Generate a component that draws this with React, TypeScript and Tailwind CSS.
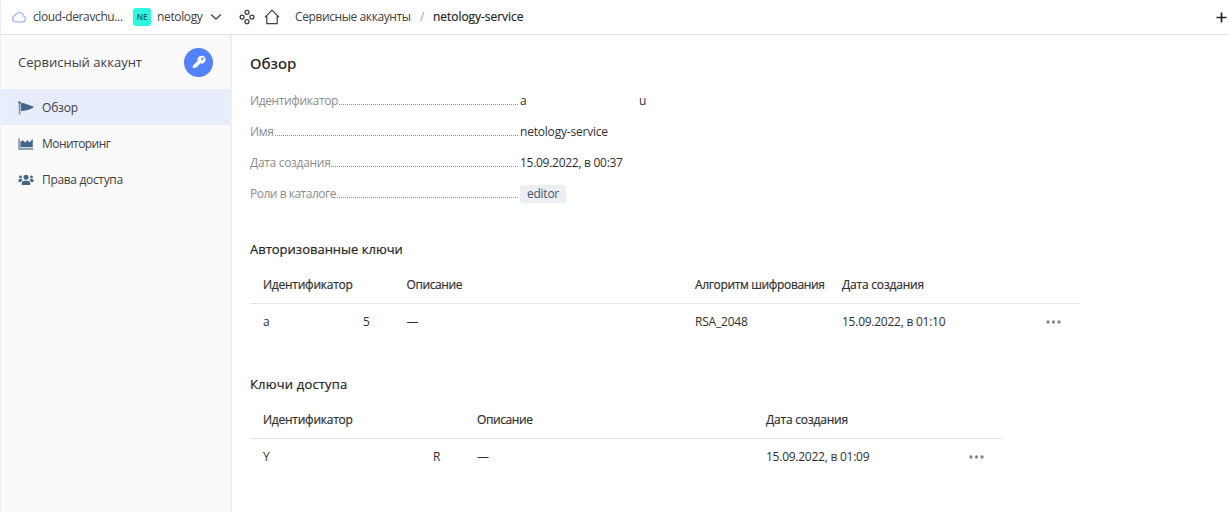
import type { ReactNode } from 'react'

const regular = "font-['Open_Sans','Noto_Sans',sans-serif]"
const medium = "font-['Noto_Sans','Open_Sans',sans-serif] font-medium"
const semi = '[-webkit-text-stroke:0.2px]'

function CloudIcon() {
  return (
    <svg width="16" height="12" viewBox="0 0 16 12" fill="none" stroke="#a3b9f4" strokeWidth="1.3">
      <path d="M4 10.8h7.7a2.9 2.9 0 0 0 1-5.6A4.3 4.3 0 0 0 4.4 4.4 3.3 3.3 0 0 0 4 10.8Z" />
    </svg>
  )
}

function ChevronIcon() {
  return (
    <svg width="12" height="8" viewBox="0 0 12 8" fill="none" stroke="#404040" strokeWidth="1.3">
      <path d="M1.2 1.5 6 6.2l4.8-4.7" />
    </svg>
  )
}

function ServicesIcon() {
  return (
    <svg width="16" height="16" viewBox="0 0 16 16" fill="none" stroke="#404040" strokeWidth="1.25">
      <circle cx="8" cy="3.3" r="2" />
      <circle cx="8" cy="12.7" r="2" />
      <circle cx="3.1" cy="8" r="2" />
      <circle cx="12.9" cy="8" r="2" />
    </svg>
  )
}

function HomeIcon() {
  return (
    <svg width="16" height="16" viewBox="0 0 16 16" fill="none" stroke="#404040" strokeWidth="1.2">
      <path d="M.9 8.3 8 1.2l7.1 7.1M2.8 6.8v7.9h10.4V6.8" />
    </svg>
  )
}

function KeyIcon() {
  return (
    <svg width="14" height="14" viewBox="0 0 14 14">
      <path
        fill="#fff"
        fillRule="evenodd"
        d="M9.400.7a3.900 3.900 0 1 1-1.200 7.500L7.300 9.100v1.200H6v1.200H4.800L4 12.700l-2.500.6-.8-.6.1-2L5.700 5.800A3.900 3.900 0 0 1 9.400.7Zm.9 1.900a1.200 1.200 0 1 0 0 2.400 1.200 1.200 0 0 0 0-2.400Z"
      />
    </svg>
  )
}

function FlagIcon() {
  return (
    <svg width="16" height="14" viewBox="0 0 16 14" fill="#44668a">
      <circle cx="1.6" cy="1.5" r="1.3" />
      <path d="M.8 2h1.600v11.400H.8z" opacity=".7" />
      <path d="M3 2.100C7 2 10 4.100 15.300 5.400v1.400C10.500 8.900 7.500 10 3 10Z" />
    </svg>
  )
}

function ChartIcon() {
  return (
    <svg width="16" height="14" viewBox="0 0 16 14" fill="#44668a">
      <path d="M.4 1.500h1.400v9.700h13.400v1.500H.4z" opacity=".8" />
      <path d="M2.400 10.300V4.800l2.300-1.500L7.300 5.500l2-2.500 2 2.500L14.800 2v8.300z" />
    </svg>
  )
}

function UsersIcon() {
  return (
    <svg width="16" height="14" viewBox="0 0 16 14" fill="#44668a">
      <circle cx="8" cy="4.300" r="2.500" />
      <circle cx="2.500" cy="4" r="1.400" />
      <circle cx="13.500" cy="4" r="1.400" />
      <path d="M3.700 12v-1.500A2.700 2.700 0 0 1 6.400 7.700h3.200a2.700 2.700 0 0 1 2.700 2.800V12Z" />
      <path d="M.5 9V7.500A1.500 1.500 0 0 1 2 6.100h1.500l1.200.7A4 4 0 0 0 3 9ZM15.500 9V7.500A1.500 1.500 0 0 0 14 6.100h-1.500l-1.200.7A4 4 0 0 1 13 9Z" />
    </svg>
  )
}

function DotsIcon() {
  return (
    <svg width="16" height="4" viewBox="0 0 16 4" fill="#858585">
      <circle cx="3" cy="2" r="1.700" />
      <circle cx="8.500" cy="2" r="1.700" />
      <circle cx="14" cy="2" r="1.700" />
    </svg>
  )
}

function Header() {
  return (
    <header className="flex h-[35px] shrink-0 items-center border-b border-[#e2e2e2] bg-white pl-[10px] text-[#404040]">
      <CloudIcon />
      <span className="ml-[6px] w-[100px] tracking-[-0.38px]">cloud-deravchu...</span>
      <span className="flex h-[18px] w-[18px] items-center justify-center rounded-[3px] bg-[#2ef7e0] text-[8px] font-semibold text-[#1d5a55]">
        NE
      </span>
      <span className="ml-[6px] w-[53px] tracking-[-0.36px]">netology</span>
      <ChevronIcon />
      <span className="ml-[17px]">
        <ServicesIcon />
      </span>
      <span className="ml-[9px]">
        <HomeIcon />
      </span>
      <span className="ml-[15px] w-[125px] tracking-[-0.4px]">Сервисные аккаунты</span>
      <span className="w-[13px] text-[#999]">/</span>
      <span className={`${semi} tracking-[-0.04px] text-[#262626]`}>netology-service</span>
      <svg className="ml-auto mr-[2px]" width="11" height="11" viewBox="0 0 11 11" stroke="#262626" strokeWidth="1.700">
        <path d="M5.500.5v10M.5 5.500h10" />
      </svg>
    </header>
  )
}

function NavItem({ icon, label, tracking, active }: { icon: ReactNode; label: string; tracking: string; active?: boolean }) {
  return (
    <a className={`flex h-9 items-center gap-2 pl-[17px] pt-[2px] ${active ? 'bg-[#e7edfa]' : ''}`}>
      {icon}
      <span className={tracking}>{label}</span>
    </a>
  )
}

function Sidebar() {
  return (
    <aside className="flex w-[231px] shrink-0 flex-col border-r-2 border-[#efefef] bg-[#fafafa] text-[#404040]">
      <div className="flex h-[54px] items-center justify-between pl-[17px] pr-[17px]">
        <span className="text-[13px]">Сервисный аккаунт</span>
        <span className="flex h-[29px] w-[29px] items-center justify-center rounded-full bg-[#5282ff]">
          <KeyIcon />
        </span>
      </div>
      <nav>
        <NavItem icon={<FlagIcon />} label="Обзор" tracking="tracking-[-0.2px]" active />
        <NavItem icon={<ChartIcon />} label="Мониторинг" tracking="tracking-[-0.55px]" />
        <NavItem icon={<UsersIcon />} label="Права доступа" tracking="tracking-[-0.33px]" />
      </nav>
    </aside>
  )
}

function Property({ label, tracking, children }: { label: string; tracking: string; children: ReactNode }) {
  return (
    <div className="flex h-[31px] items-center">
      <dt className="flex w-[268px] items-end text-[#8c8c8c]">
        <span className={tracking}>{label}</span>
        <span className="mb-[5px] ml-[1px] grow border-b border-dotted border-[#909090]" />
      </dt>
      <dd className="ml-[2px] flex items-center">{children}</dd>
    </div>
  )
}

function Overview() {
  return (
    <dl className="mt-[11px]">
      <Property label="Идентификатор" tracking="tracking-[-0.38px]">
        <span className="w-[119px]">a</span>
        <span>u</span>
      </Property>
      <Property label="Имя" tracking="tracking-[-0.35px]">
        <span className="tracking-[-0.2px]">netology-service</span>
      </Property>
      <Property label="Дата создания" tracking="tracking-[-0.31px]">
        <span className="tracking-[-0.28px]">15.09.2022, в 00:37</span>
      </Property>
      <Property label="Роли в каталоге" tracking="tracking-[-0.48px]">
        <span className="h-[18px] rounded-[3px] bg-[#ebeff3] px-[7px] leading-[18px] tracking-[-0.25px] text-[#44566b]">
          editor
        </span>
      </Property>
    </dl>
  )
}

function AuthorizedKeys() {
  return (
    <section className="mt-[31px]">
      <h2 className={`${semi} h-[18px] text-[13px] leading-[18px] text-[#262626]`}>Авторизованные ключи</h2>
      <div className="w-[830px]">
        <div
          className={`${semi} mt-[8px] grid h-[38px] grid-cols-[143.500px_288.500px_147px_1fr] items-center border-b border-[#e5e5e5] pl-[13px]`}
        >
          <span className="tracking-[-0.25px]">Идентификатор</span>
          <span className="tracking-[-0.4px]">Описание</span>
          <span className="tracking-[-0.35px]">Алгоритм шифрования</span>
          <span className="tracking-[-0.2px]">Дата создания</span>
        </div>
        <div className="grid h-9 grid-cols-[143.500px_288.500px_147px_1fr_35px] items-center pl-[13px]">
          <span className="flex">
            <span className="w-[100px]">a</span>5
          </span>
          <span>—</span>
          <span className="tracking-[-0.2px]">RSA_2048</span>
          <span className="tracking-[-0.25px]">15.09.2022, в 01:10</span>
          <DotsIcon />
        </div>
      </div>
    </section>
  )
}

function AccessKeys() {
  return (
    <section className="mt-[35px]">
      <h2 className={`${semi} h-[18px] text-[13px] leading-[18px] tracking-[0.18px] text-[#262626]`}>Ключи доступа</h2>
      <div className="w-[753px]">
        <div
          className={`${semi} mt-[8px] grid h-[38px] grid-cols-[214px_289px_1fr] items-center border-b border-[#e5e5e5] pl-[13px]`}
        >
          <span className="tracking-[-0.25px]">Идентификатор</span>
          <span className="tracking-[-0.4px]">Описание</span>
          <span className="tracking-[-0.2px]">Дата создания</span>
        </div>
        <div className="grid h-9 grid-cols-[214px_289px_1fr_35px] items-center pl-[13px]">
          <span className="flex">
            <span className="w-[170px]">Y</span>R
          </span>
          <span>—</span>
          <span className="tracking-[-0.25px]">15.09.2022, в 01:09</span>
          <DotsIcon />
        </div>
      </div>
    </section>
  )
}

export default function App() {
  return (
    <div
      className={`${regular} flex h-[512px] w-full flex-col overflow-hidden border-l border-[#eceef5] bg-white text-[12px] leading-[18px] text-[#303030]`}
    >
      <Header />
      <div className="flex min-h-0 grow">
        <Sidebar />
        <main className="grow pl-[18px] pt-[18px]">
          <h1 className={`${medium} h-[21px] text-[15px] leading-[21px] text-[#262626]`}>Обзор</h1>
          <Overview />
          <AuthorizedKeys />
          <AccessKeys />
        </main>
      </div>
    </div>
  )
}
